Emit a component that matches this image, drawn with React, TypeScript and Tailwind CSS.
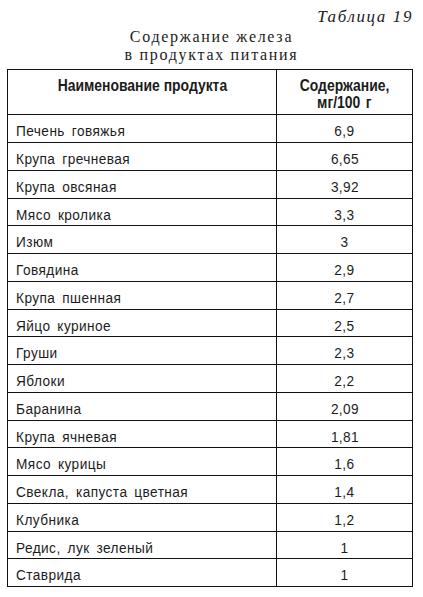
import React from "react";

const rows: [string, string][] = [
  ["Печень говяжья", "6,9"],
  ["Крупа гречневая", "6,65"],
  ["Крупа овсяная", "3,92"],
  ["Мясо кролика", "3,3"],
  ["Изюм", "3"],
  ["Говядина", "2,9"],
  ["Крупа пшенная", "2,7"],
  ["Яйцо куриное", "2,5"],
  ["Груши", "2,3"],
  ["Яблоки", "2,2"],
  ["Баранина", "2,09"],
  ["Крупа ячневая", "1,81"],
  ["Мясо курицы", "1,6"],
  ["Свекла, капуста цветная", "1,4"],
  ["Клубника", "1,2"],
  ["Редис, лук зеленый", "1"],
  ["Ставрида", "1"],
];

export default function App() {
  return (
    <div className="w-[423px] h-[597px] bg-white overflow-hidden text-[#1c1c1c]">
      <div
        className="pt-[8px] pr-[10px] text-right italic text-[17px] leading-[17px] tracking-[1.6px]"
        style={{ fontFamily: '"Liberation Serif", serif' }}
      >
        Таблица 19
      </div>
      <div
        className="mt-[3px] text-center text-[16px] leading-[17.7px] tracking-[1.7px]"
        style={{ fontFamily: '"Liberation Serif", serif' }}
      >
        <div>Содержание железа</div>
        <div>в продуктах питания</div>
      </div>
      <div
        className="mt-[6px] ml-[7px] w-[406px] border-t border-l border-r border-[#111]"
        style={{ fontFamily: '"Liberation Sans", Arial, sans-serif' }}
      >
        <div className="flex h-[45px] border-b border-[#111] font-bold text-[16px] leading-[16.6px]">
          <div className="w-[269px] border-r border-[#111] pt-[8px] text-center">
            <span className="inline-block origin-center scale-x-[0.87]">Наименование продукта</span>
          </div>
          <div className="flex-1 pt-[8px] text-center">
            <div>
              <span className="inline-block origin-center scale-x-[0.87]">Содержание,</span>
            </div>
            <div>
              <span className="inline-block origin-center scale-x-[0.87] [word-spacing:2px]">мг/100 г</span>
            </div>
          </div>
        </div>
        {rows.map(([name, val], i) => (
          <div
            key={i}
            className="flex h-[27.75px] border-b border-[#111] text-[15.5px] leading-[18px]"
          >
            <div className="w-[269px] border-r border-[#111] pl-[8px] pt-[7px] whitespace-nowrap">
              <span className="inline-block origin-left scale-x-[0.88] tracking-[0.5px] [word-spacing:3px]">
                {name}
              </span>
            </div>
            <div className="flex-1 pt-[7px] text-center">
              <span className="inline-block origin-center scale-x-[0.88] tracking-[0.4px]">{val}</span>
            </div>
          </div>
        ))}
      </div>
    </div>
  );
}
